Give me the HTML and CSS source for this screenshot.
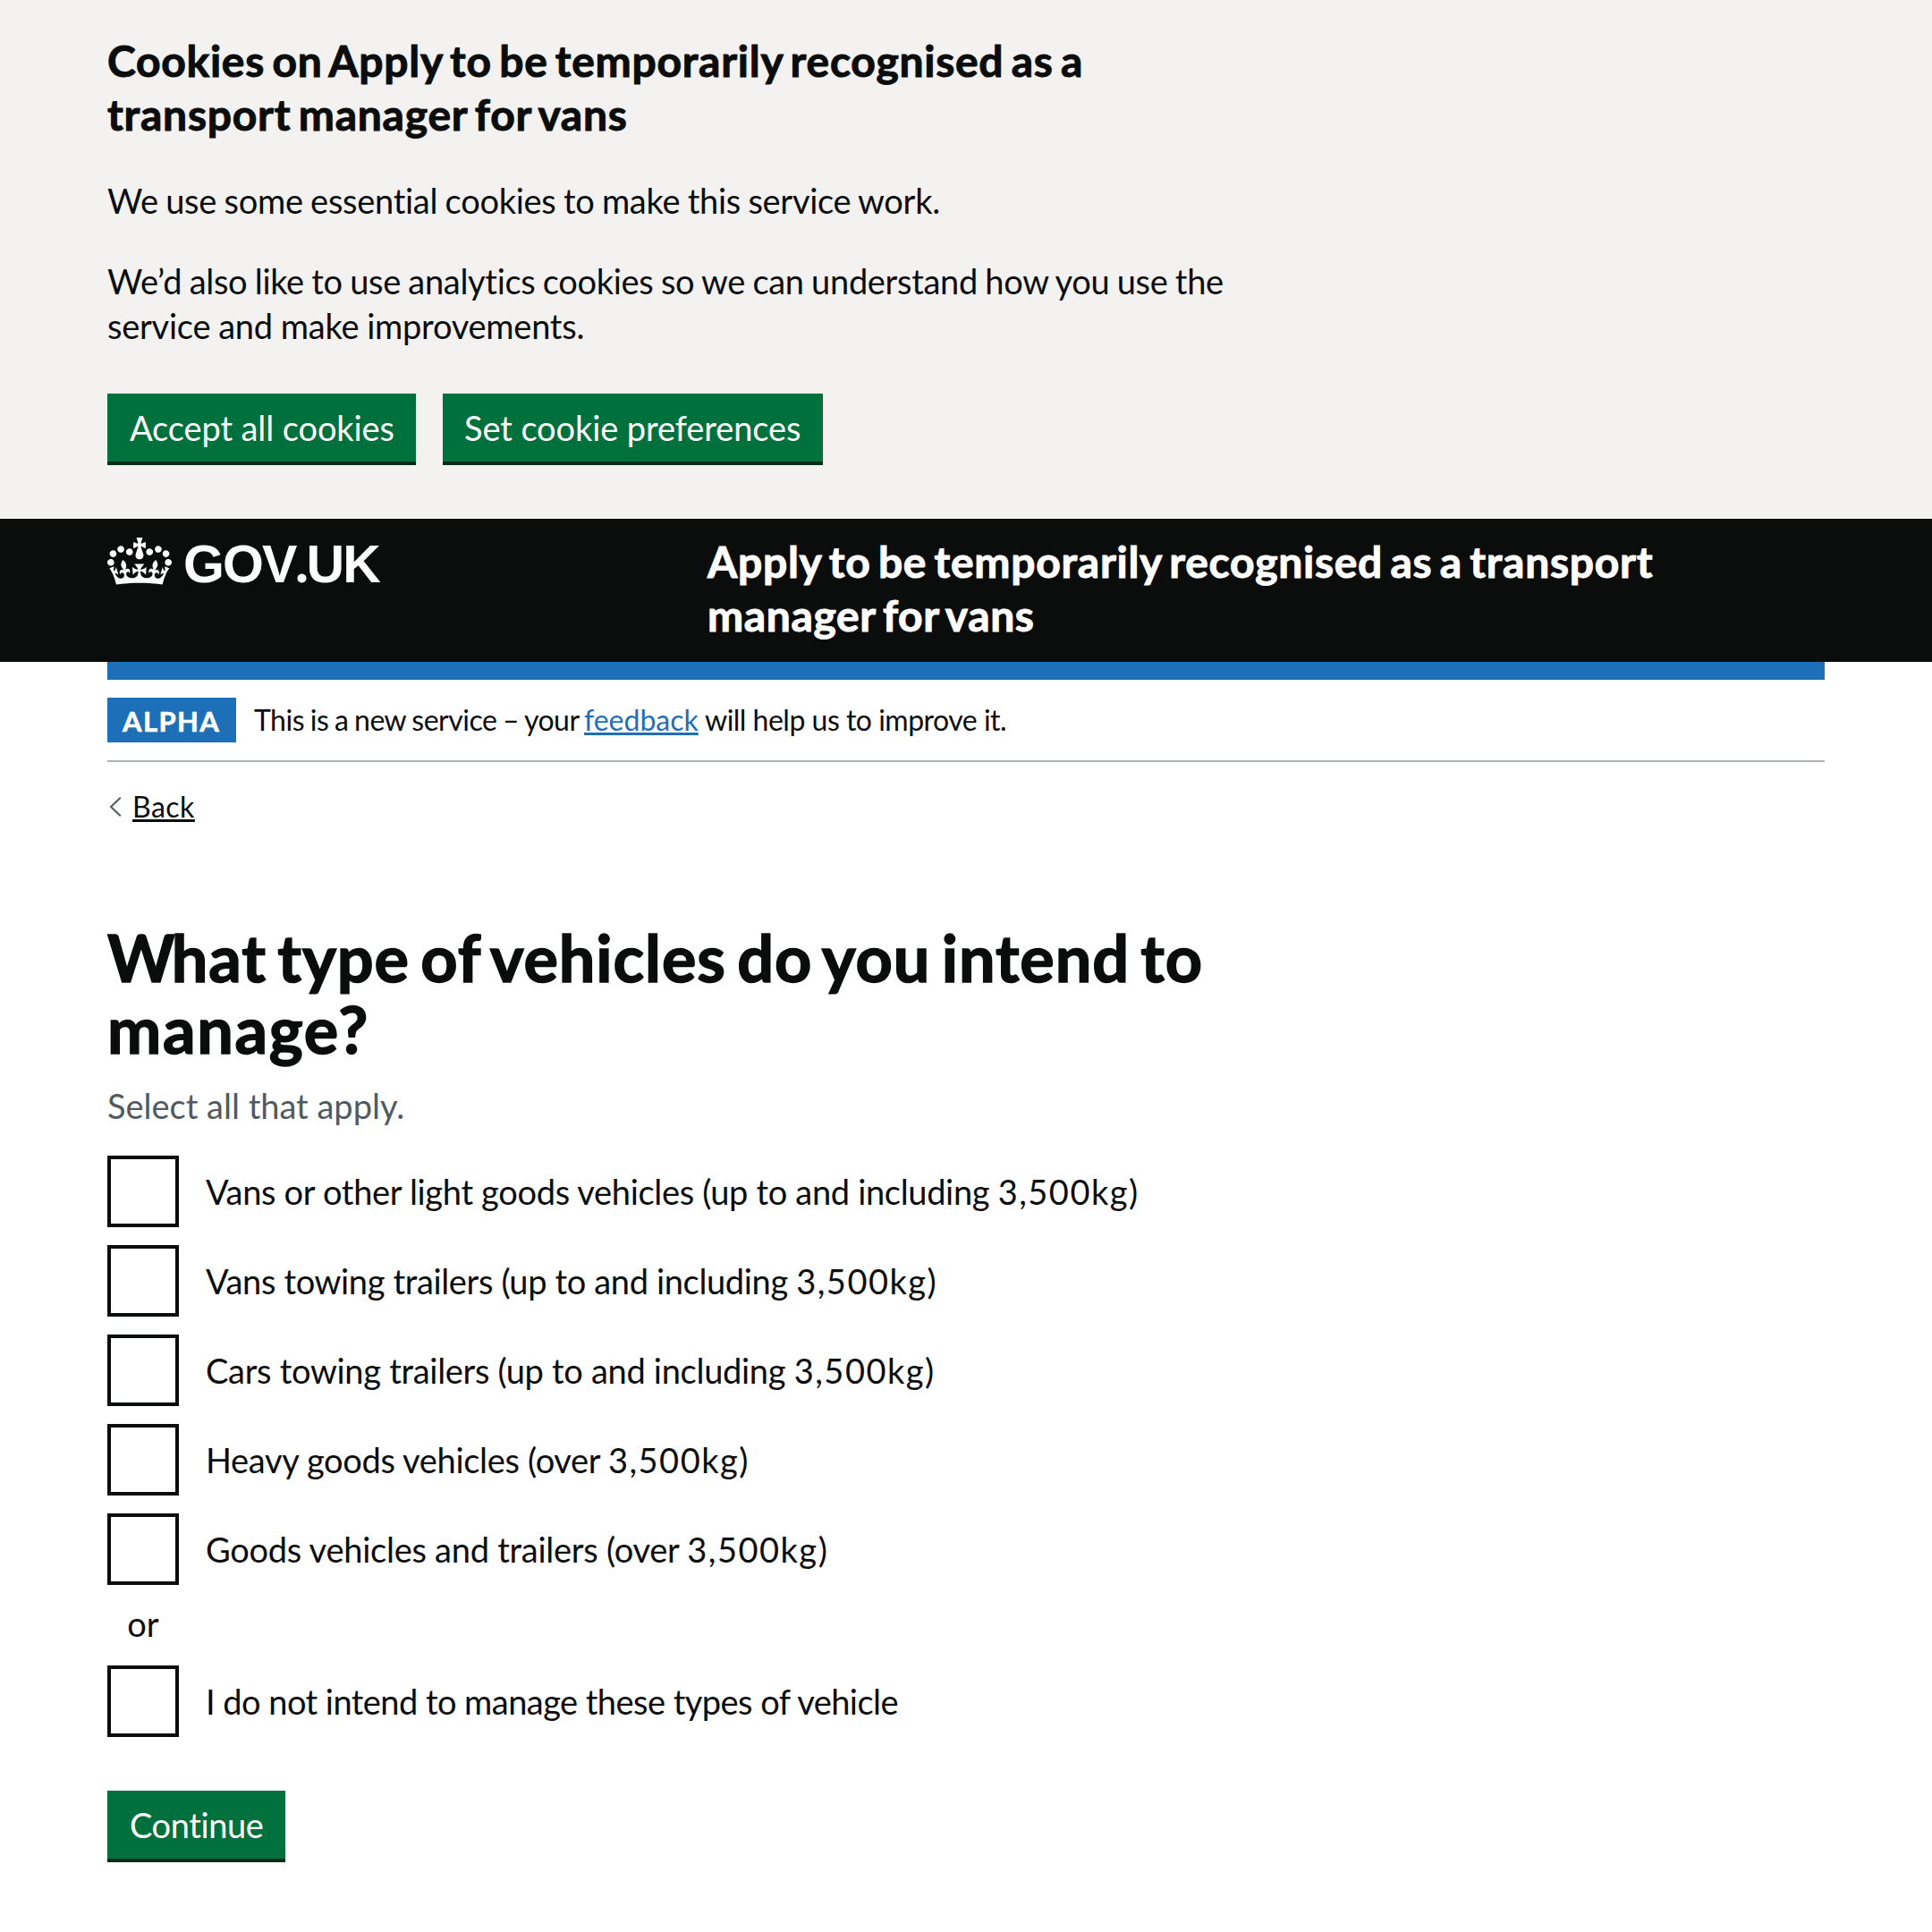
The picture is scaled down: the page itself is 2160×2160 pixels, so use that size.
FILE: index.html
```html
<!DOCTYPE html>
<html lang="en">
<head>
<meta charset="utf-8">
<title>What type of vehicles do you intend to manage?</title>
<link rel="stylesheet" href="styles.css">
</head>
<body>
<section class="cookie-banner" aria-label="Cookies">
  <h2 class="cookie-title"><span class="ct-1">Cookies on Apply to be temporarily recognised as a</span><br><span class="ct-2">transport manager for vans</span></h2>
  <p class="cookie-text cookie-use">We use some essential cookies to make this service work.</p>
  <p class="cookie-text cookie-also"><span class="ca-1">We’d also like to use analytics cookies so we can understand how you use the</span><br><span class="ca-2">service and make improvements.</span></p>
  <div class="button-group">
    <button class="button button-accept" type="button">Accept all cookies</button>
    <button class="button button-set" type="button">Set cookie preferences</button>
  </div>
</section>

<header class="header">
  <div class="logo">
    <svg class="crown" viewBox="0 0 132 97" width="72" height="53" fill="#fff" fill-rule="evenodd" aria-hidden="true">
      <path d="M25 30.2c3.5 1.5 7.7-.2 9.1-3.7 1.5-3.6-.2-7.8-3.9-9.2-3.6-1.4-7.6.3-9.1 3.9-1.4 3.5.3 7.5 3.9 9zM9 39.5c3.6 1.5 7.8-.2 9.2-3.7 1.5-3.6-.2-7.8-3.9-9.1-3.6-1.5-7.6.2-9.1 3.8-1.4 3.5.3 7.5 3.8 9zM4.4 57.2c3.5 1.5 7.7-.2 9.1-3.8 1.5-3.6-.2-7.7-3.9-9.1-3.5-1.5-7.6.3-9.1 3.8-1.4 3.5.3 7.6 3.9 9.1zm38.3-21.4c3.5 1.5 7.7-.2 9.1-3.8 1.5-3.6-.2-7.7-3.9-9.1-3.6-1.5-7.6.3-9.1 3.8-1.3 3.6.4 7.7 3.9 9.1zm64.4-5.6c-3.6 1.5-7.8-.2-9.1-3.7-1.5-3.6.2-7.8 3.8-9.2 3.6-1.4 7.7.3 9.2 3.9 1.3 3.5-.4 7.5-3.9 9zm15.9 9.3c-3.6 1.5-7.7-.2-9.1-3.7-1.5-3.6.2-7.8 3.7-9.1 3.6-1.5 7.7.2 9.2 3.8 1.5 3.5-.3 7.5-3.8 9zm4.7 17.7c-3.6 1.5-7.8-.2-9.2-3.8-1.5-3.6.2-7.7 3.9-9.1 3.6-1.5 7.7.3 9.2 3.8 1.3 3.5-.4 7.6-3.9 9.1zM89.3 35.8c-3.6 1.5-7.8-.2-9.2-3.8-1.4-3.6.2-7.7 3.9-9.1 3.6-1.5 7.7.3 9.2 3.8 1.4 3.6-.3 7.7-3.9 9.1zM69.7 17.7l8.9 4.7V9.3l-8.9 2.8c-.2-.3-.5-.6-.9-.9L72.4 0H59.6l3.5 11.2c-.3.3-.6.5-.9.9l-8.8-2.8v13.1l8.8-4.7c.3.3.6.7.9.9l-5 15.4v.1c-.2.8-.4 1.6-.4 2.4 0 4.1 3.1 7.5 7 8.1h.2c.3 0 .7.1 1 .1.4 0 .7 0 1-.1h.2c4-.6 7.1-4.1 7.1-8.1 0-.8-.1-1.7-.4-2.4V34l-5.1-15.4c.4-.2.7-.6 1-.9zM66 92.8c16.9 0 32.8 1.1 47.1 3.2 4-16.9 8.9-26.7 14-33.5l-9.6-3.4c1 4.9 1.1 7.2 0 10.2-1.5-1.4-3-4.3-4.2-8.7L108.6 76c2.8-2 5-3.2 7.5-3.3-4.4 9.4-10 11.9-13.6 11.2-4.3-.8-6.3-4.6-5.6-7.9 1-4.7 5.7-5.9 8-.5 4.3-8.7-3-11.4-7.6-8.8 7.1-7.2 7.9-13.5 2.1-21.1-8 6.1-8.1 12.3-4.5 20.8-4.7-5.4-12.1-2.5-9.5 6.2 3.4-5.2 7.9-2 7.2 3.1-.6 4.3-6.4 7.8-13.5 7.2-10.3-.9-10.9-8-11.2-13.8 2.5-.5 7.1 1.8 11 7.3L80.2 60c-4.1 4.4-8 5.3-12.3 5.4 1.4-4.4 8-11.6 8-11.6H55.5s6.4 7.2 7.9 11.6c-4.2-.1-8-1-12.3-5.4l1.4 16.4c3.9-5.5 8.5-7.7 10.9-7.3-.3 5.8-.9 12.8-11.1 13.8-7.2.6-12.9-2.9-13.5-7.2-.7-5 3.8-8.3 7.1-3.1 2.7-8.7-4.6-11.6-9.4-6.2 3.7-8.5 3.6-14.7-4.6-20.8-5.8 7.6-5 13.9 2.2 21.1-4.7-2.6-11.9.1-7.7 8.8 2.3-5.5 7.1-4.2 8.1.5.7 3.3-1.3 7.1-5.7 7.9-3.5.7-9-1.8-13.5-11.2 2.5.1 4.7 1.3 7.5 3.3l-4.7-15.4c-1.2 4.4-2.7 7.2-4.3 8.7-1.1-3-.9-5.3 0-10.2l-9.5 3.4c5 6.9 9.9 16.7 14 33.5 14.8-2.1 30.8-3.2 47.7-3.2z"/>
    </svg>
    <span class="logo-text">GOV<span class="logo-dot">.</span>UK</span>
  </div>
  <div class="service-name"><span class="sn-1">Apply to be temporarily recognised as a transport</span><br><span class="sn-2">manager for vans</span></div>
</header>

<main class="container">
  <div class="phase-banner">
    <strong class="tag">ALPHA</strong>
    <p class="phase-text"><span class="ph-1">This is a new service – your</span><a class="feedback" href="#">feedback</a><span class="ph-2">will help us to improve it.</span></p>
  </div>
  <a class="back" href="#">
    <svg class="chevron" width="14" height="22" viewBox="0 0 14 22" fill="none" stroke="#505a5f" stroke-width="2" aria-hidden="true"><path d="M12.8.7 2 11l10.800 10.300"/></svg>
    <span class="back-text">Back</span>
  </a>
  <form class="form">
    <h1 class="heading"><span class="hd-1"><span class="cap">W</span>hat type of vehicles do you intend to</span><br><span class="hd-2">manage?</span></h1>
    <p class="hint">Select all that apply.</p>
    <div class="options">
      <label class="option"><input class="box" type="checkbox"><span class="label op-1">Vans or other light goods vehicles (up to and including <span class="num">3,500kg)</span></span></label>
      <label class="option"><input class="box" type="checkbox"><span class="label op-2">Vans towing trailers (up to and including <span class="num">3,500kg)</span></span></label>
      <label class="option"><input class="box" type="checkbox"><span class="label op-3">Cars towing trailers (up to and including <span class="num">3,500kg)</span></span></label>
      <label class="option"><input class="box" type="checkbox"><span class="label op-4">Heavy goods vehicles (over <span class="num">3,500kg)</span></span></label>
      <label class="option"><input class="box" type="checkbox"><span class="label op-5">Goods vehicles and trailers (over <span class="num">3,500kg)</span></span></label>
    </div>
    <div class="divider">or</div>
    <label class="option"><input class="box" type="checkbox"><span class="label op-6">I do not intend to manage these types of vehicle</span></label>
    <button class="button button-continue" type="button">Continue</button>
  </form>
</main>
</body>
</html>
```
FILE: styles.css
```css
* { box-sizing: border-box; }
body {
  margin: 0;
  background: #fff;
  color: #0b0c0c;
  font: 38px/50px Lato, "Liberation Sans", sans-serif;
  font-variant-ligatures: none;
  white-space: nowrap;
}
h1, h2, p { margin: 0; }

/* Cookie banner */
.cookie-banner { height: 580px; padding: 38px 120px 0; background: #f3f2f1; }
.cookie-title { font-size: 48px; line-height: 60px; font-weight: 700; -webkit-text-stroke: 1px currentColor; }
.ct-1 { letter-spacing: 0.72px; word-spacing: -4px; }
.ct-2 { letter-spacing: 0.75px; word-spacing: -4px; }
.cookie-use { margin-top: 41px; letter-spacing: -0.28px; word-spacing: -1px; }
.cookie-also { margin-top: 40px; }
.ca-1 { letter-spacing: -0.31px; word-spacing: -1px; }
.ca-2 { letter-spacing: -0.25px; word-spacing: -0.5px; }

/* Buttons */
.button-group { display: flex; gap: 30px; margin-top: 51px; }
.button {
  height: 80px;
  padding: 10px 0 14px 25px;
  border: 0;
  border-radius: 0;
  background: #00703c;
  box-shadow: inset 0 -4px #002d18;
  color: #fff;
  font: inherit;
  font-variant-ligatures: none;
  text-align: left;
}
.button-accept { width: 345px; letter-spacing: -0.1px; }
.button-set { width: 425px; padding-left: 24px; letter-spacing: -0.1px; }
.button-continue { display: block; width: 199px; margin-top: 60px; letter-spacing: -0.4px; }

/* Header */
.header {
  display: grid;
  grid-template-columns: 671px 1fr;
  height: 160px;
  padding: 18px 120px 0;
  background: #0b0c0c;
  color: #fff;
}
.logo { display: flex; align-items: flex-start; gap: 13px; padding-top: 3px; }
.logo-text {
  font-family: "Liberation Sans", Arial, sans-serif;
  font-size: 59px;
  line-height: 60px;
  font-weight: 700;
  letter-spacing: -1.9px;
}
.logo-dot { font-family: Lato, sans-serif; line-height: 0; -webkit-text-stroke: 1px currentColor; }
.service-name { font-size: 48px; line-height: 60px; font-weight: 700; -webkit-text-stroke: 1px currentColor; }
.sn-1 { letter-spacing: 0.72px; word-spacing: -4px; }
.sn-2 { letter-spacing: 0.6px; word-spacing: -4px; }

/* Phase banner */
.container { margin: 0 120px; border-top: 20px solid #1d70b8; }
.phase-banner {
  display: flex;
  gap: 20px;
  height: 92px;
  padding-top: 20px;
  border-bottom: 2px solid #b1b4b6;
  font-size: 32px;
  line-height: 40px;
}
.tag {
  width: 144px;
  height: 50px;
  padding: 6px 0 0 17px;
  background: #1d70b8;
  color: #fff;
  font-size: 31px;
  font-weight: 700;
  letter-spacing: 1.4px;
  -webkit-text-stroke: 0.6px currentColor;
}
.phase-text { display: flex; padding-top: 5px; }
.ph-1 { width: 369px; letter-spacing: -0.5px; word-spacing: -1px; }
.feedback {
  width: 129px;
  margin-right: 6px;
  color: #1d70b8;
  text-decoration: underline;
  text-decoration-thickness: 3px;
  text-underline-offset: 2px;
}
.ph-2 { letter-spacing: -0.5px; }

/* Back link */
.back {
  display: flex;
  align-items: center;
  gap: 12px;
  width: fit-content;
  margin-top: 30px;
  padding-left: 2px;
  color: #0b0c0c;
  font-size: 32px;
  line-height: 40px;
  text-decoration: none;
}
.back-text { letter-spacing: 0.5px; text-decoration: underline; text-decoration-thickness: 3px; text-underline-offset: 2px; }

/* Question */
.form { margin-top: 108px; }
.heading { font-size: 72px; line-height: 80px; font-weight: 700; -webkit-text-stroke: 1.5px currentColor; }
.hd-1 { letter-spacing: 0.9px; word-spacing: -6px; }
.cap { letter-spacing: -4px; }
.hd-2 { letter-spacing: 1.7px; }
.hint { margin-top: 21px; color: #505a5f; }
.options { display: grid; gap: 20px; margin-top: 31px; }
.option { display: flex; align-items: center; gap: 30px; height: 80px; }
.box { appearance: none; width: 80px; height: 80px; margin: 0; border: 4px solid #0b0c0c; background: #fff; }
.op-1 { letter-spacing: -0.32px; }
.op-2 { letter-spacing: -0.35px; }
.op-3 { letter-spacing: -0.29px; }
.op-4 { letter-spacing: -0.33px; }
.op-5 { letter-spacing: -0.26px; }
.op-6 { letter-spacing: -0.54px; }
.num { letter-spacing: 1.5px; }
.divider { width: 80px; margin: 18px 0 22px; text-align: center; }
```
